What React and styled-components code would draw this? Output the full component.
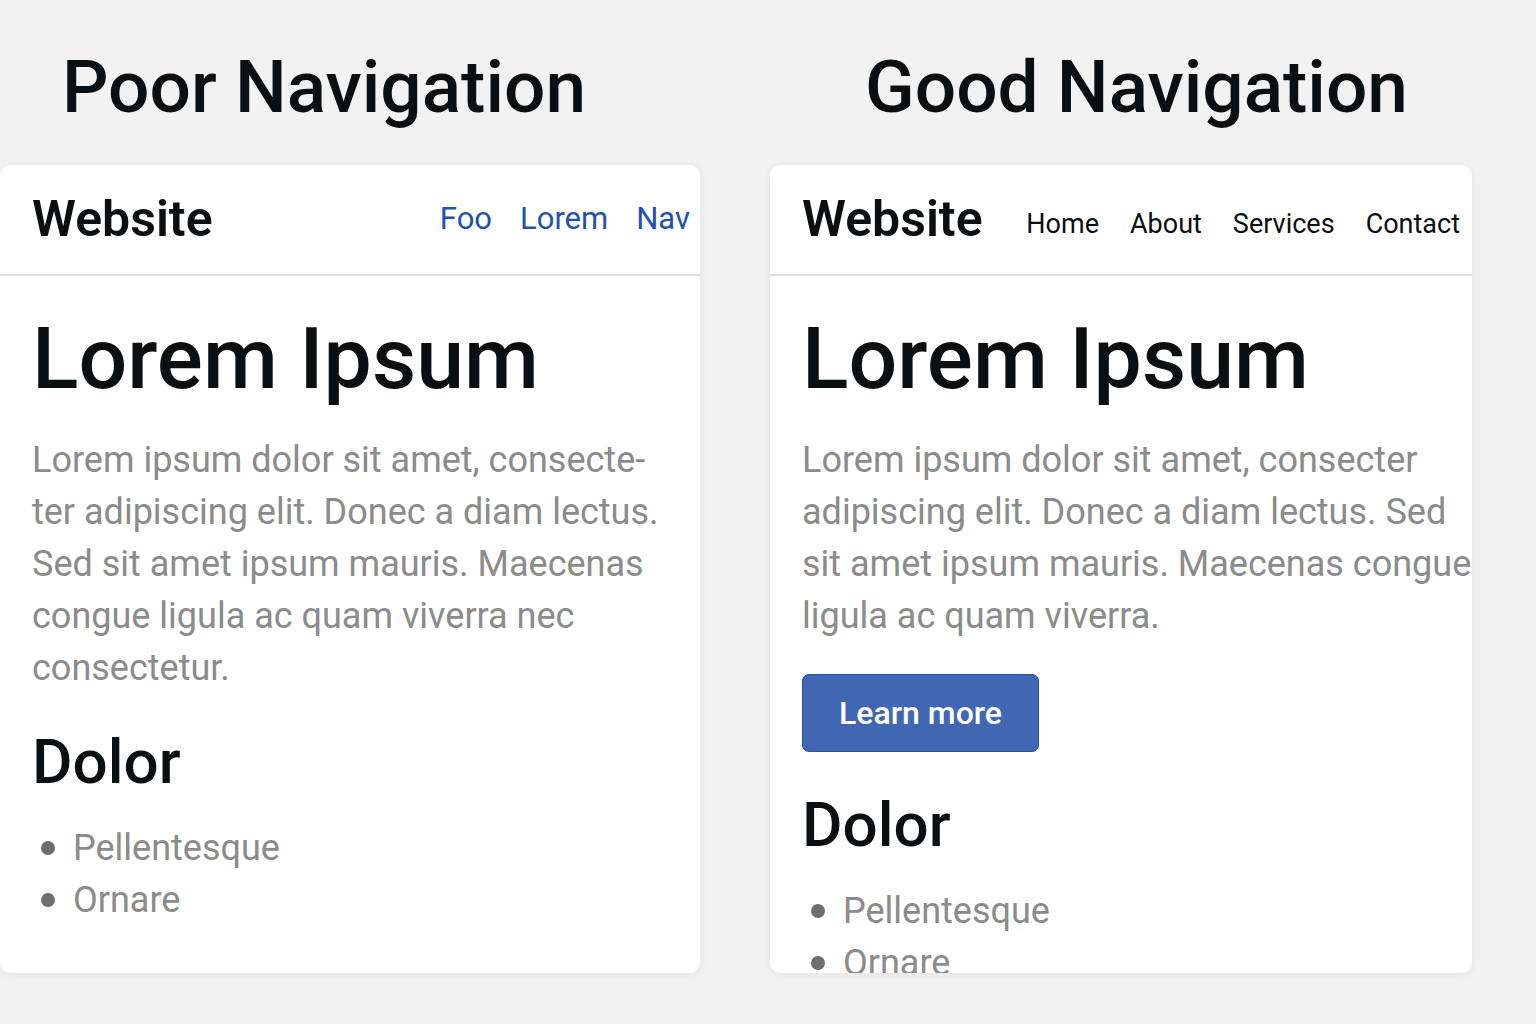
import React from "react";
import styled, { createGlobalStyle } from "styled-components";

const GlobalStyle = createGlobalStyle`
  *, *::before, *::after { box-sizing: border-box; }
  body {
    margin: 0;
    background: #f2f2f2;
    color: #0b0f12;
    font-family: Roboto, "Liberation Sans", sans-serif;
  }
  h1, h2, h3, p, ul { margin: 0; padding: 0; }
`;

const Page = styled.main`
  display: grid;
  grid-template-columns: minmax(0, 350fr) minmax(0, 351fr);
  column-gap: 70px;
  height: 100vh;
  padding: 48px 64px 51px 0;
`;

const Column = styled.section`
  display: flex;
  flex-direction: column;
  min-height: 0;
`;

const Title = styled.h1`
  padding-left: ${(p) => p.$indent}px;
  margin-bottom: 39px;
  font-size: 73px;
  font-weight: 500;
  line-height: 78px;
  white-space: nowrap;
`;

const Card = styled.article`
  flex: 1;
  min-height: 0;
  overflow: hidden;
  background: #fff;
  border-radius: 10px;
  box-shadow: 0 1px 8px rgba(0, 0, 0, 0.07);
`;

const SiteHeader = styled.header`
  display: flex;
  align-items: center;
  justify-content: space-between;
  padding: 25px ${(p) => p.$end}px 26px 32px;
  border-bottom: 2px solid #dedfe0;
`;

const Brand = styled.span`
  font-size: 50px;
  font-weight: 600;
  line-height: 58px;
`;

const Nav = styled.nav`
  display: flex;
  gap: ${(p) => p.$gap}px;
  padding-top: ${(p) => p.$drop}px;
  font-size: ${(p) => p.$size}px;
  line-height: 40px;
`;

const NavLink = styled.a`
  color: ${(p) => p.$color};
  text-decoration: none;
  white-space: nowrap;
`;

const Content = styled.div`
  padding: 32px 0 0 32px;
`;

const Heading = styled.h2`
  margin-bottom: 24px;
  font-size: 86px;
  font-weight: 500;
  line-height: 102px;
  white-space: nowrap;
`;

const Paragraph = styled.p`
  color: #8b8b8b;
  font-size: 36px;
  line-height: 52px;
  white-space: nowrap;
`;

const LearnMore = styled.button`
  display: block;
  margin-top: 32px;
  padding: 18px 36px;
  border: 1px solid #2450ae;
  border-radius: 7px;
  background: #4267b2;
  color: #fff;
  font: 500 32px/40px Roboto, "Liberation Sans", sans-serif;
`;

const Subheading = styled.h3`
  margin-top: ${(p) => p.$space}px;
  font-size: 62px;
  font-weight: 500;
  line-height: 72px;
`;

const List = styled.ul`
  margin-top: 24px;
  list-style: none;
`;

const Item = styled.li`
  display: flex;
  align-items: center;
  gap: 18px;
  padding-left: 9px;
  color: #8b8b8b;
  font-size: 36px;
  line-height: 52px;

  &::before {
    content: "";
    width: 14px;
    height: 14px;
    border-radius: 50%;
    background: #6d6e70;
  }
`;

const lists = ["Pellentesque", "Ornare"];

const examples = [
  {
    title: "Poor Navigation",
    indent: 62,
    nav: { links: ["Foo", "Lorem", "Nav"], size: 31, gap: 28, drop: 0, end: 10, color: "#2451ac" },
    lines: [
      "Lorem ipsum dolor sit amet, consecte-",
      "ter adipiscing elit. Donec a diam lectus.",
      "Sed sit amet ipsum mauris. Maecenas",
      "congue ligula ac quam viverra nec",
      "consectetur.",
    ],
    space: 32,
  },
  {
    title: "Good Navigation",
    indent: 95,
    nav: { links: ["Home", "About", "Services", "Contact"], size: 27, gap: 31, drop: 10, end: 12, color: "#0b0f12" },
    lines: [
      "Lorem ipsum dolor sit amet, consecter",
      "adipiscing elit. Donec a diam lectus. Sed",
      "sit amet ipsum mauris. Maecenas congue",
      "ligula ac quam viverra.",
    ],
    action: "Learn more",
    space: 37,
  },
];

function Example({ title, indent, nav, lines, action, space }) {
  return (
    <Column>
      <Title $indent={indent}>{title}</Title>
      <Card>
        <SiteHeader $end={nav.end}>
          <Brand>Website</Brand>
          <Nav $size={nav.size} $gap={nav.gap} $drop={nav.drop}>
            {nav.links.map((l) => (
              <NavLink key={l} href="#" $color={nav.color}>{l}</NavLink>
            ))}
          </Nav>
        </SiteHeader>
        <Content>
          <Heading>Lorem Ipsum</Heading>
          <Paragraph>
            {lines.map((line, i) => (
              <React.Fragment key={line}>
                {i > 0 && <br />}
                {line}
              </React.Fragment>
            ))}
          </Paragraph>
          {action && <LearnMore type="button">{action}</LearnMore>}
          <Subheading $space={space}>Dolor</Subheading>
          <List>
            {lists.map((item) => (
              <Item key={item}>{item}</Item>
            ))}
          </List>
        </Content>
      </Card>
    </Column>
  );
}

export default function App() {
  return (
    <>
      <GlobalStyle />
      <Page>
        {examples.map((e) => (
          <Example key={e.title} {...e} />
        ))}
      </Page>
    </>
  );
}
